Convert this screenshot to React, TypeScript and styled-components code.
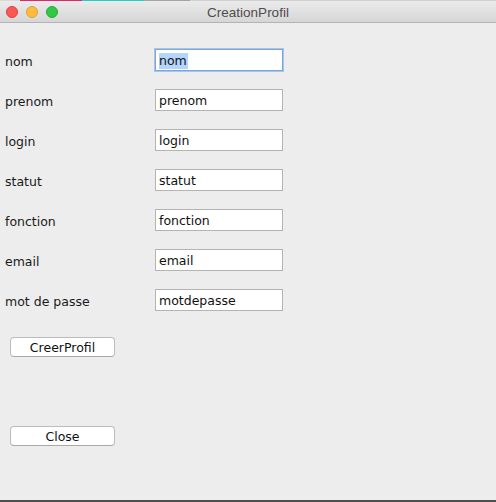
import React from 'react';
import styled, {createGlobalStyle} from "styled-components";

const GlobalStyle = createGlobalStyle`
  html, body {
    margin: 0;
    padding: 0;
    background: #ededed;
  }
  body {
    font-family: "DejaVu Sans", "Liberation Sans", sans-serif;
  }
`

const fields = [
    {label: 'nom', value: 'nom', focused: true},
    {label: 'prenom', value: 'prenom'},
    {label: 'login', value: 'login'},
    {label: 'statut', value: 'statut'},
    {label: 'fonction', value: 'fonction'},
    {label: 'email', value: 'email'},
    {label: 'mot de passe', value: 'motdepasse'},
];

const App: React.FC = () => {
    return (
        <Window>
            <GlobalStyle/>
            <TitleBar>
                <EdgeStrip>
                    <Segment $w={20} $c="#d9d9d9"/>
                    <Segment $w={62} $c="#e0266c"/>
                    <Segment $w={62} $c="#25cfc6"/>
                    <Segment $w={46} $c="#a4a4a4"/>
                    <Segment $w={306} $c="#cfcfcf"/>
                </EdgeStrip>
                <Lights>
                    <Light $bg="#fc5753" $border="#de3f3b"/>
                    <Light $bg="#fdbc40" $border="#dea034"/>
                    <Light $bg="#33c748" $border="#27aa35"/>
                </Lights>
                <Title>CreationProfil</Title>
            </TitleBar>
            <Content>
                <Form>
                    {fields.map(f => (
                        <Row key={f.label}>
                            <Label>{f.label}</Label>
                            <Field $focused={f.focused}>
                                {f.focused ? <Selected>{f.value}</Selected> : f.value}
                            </Field>
                        </Row>
                    ))}
                </Form>
                <Button $top={26}>CreerProfil</Button>
                <Button $top={69}>Close</Button>
            </Content>
            <BottomEdge/>
        </Window>
    )
};

export default App;

const Window = styled.div`
  width: 496px;
  height: 502px;
  display: flex;
  flex-direction: column;
  background: #ededed;
  overflow: hidden;
`
const TitleBar = styled.div`
  position: relative;
  height: 22px;
  flex-shrink: 0;
  display: flex;
  align-items: center;
  justify-content: center;
  background: linear-gradient(#ececec, #d6d6d6);
  border-bottom: 1px solid #b3b3b3;
`
const EdgeStrip = styled.div`
  position: absolute;
  top: 0;
  left: 0;
  right: 0;
  height: 1px;
  display: flex;
`
const Segment = styled.div<{ $w: number; $c: string }>`
  width: ${p => p.$w}px;
  background: ${p => p.$c};
`
const Lights = styled.div`
  position: absolute;
  left: 6px;
  top: 6px;
  display: flex;
  gap: 8px;
`
const Light = styled.div<{ $bg: string; $border: string }>`
  width: 12px;
  height: 12px;
  box-sizing: border-box;
  border-radius: 50%;
  background: ${p => p.$bg};
  border: 1px solid ${p => p.$border};
`
const Title = styled.div`
  font-family: "Liberation Sans", "DejaVu Sans", sans-serif;
  font-size: 13.5px;
  color: #4d4d4d;
  margin-top: 2px;
`
const Content = styled.div`
  flex: 1;
  display: flex;
  flex-direction: column;
  align-items: flex-start;
  padding-top: 26px;
`
const Form = styled.div`
  display: flex;
  flex-direction: column;
  gap: 18px;
`
const Row = styled.div`
  display: flex;
  align-items: center;
  height: 22px;
`
const Label = styled.div`
  width: 150px;
  padding-left: 5px;
  padding-top: 2px;
  font-size: 12.5px;
  color: #1a1a1a;
`
const Field = styled.div<{ $focused?: boolean }>`
  box-sizing: border-box;
  width: 128px;
  height: 22px;
  padding: 1px 3px 0;
  display: flex;
  align-items: center;
  background: #fff;
  font-size: 12.5px;
  color: #111;
  border: 1px solid ${p => p.$focused ? '#7ea6dd' : '#b4b4b4'};
  box-shadow: ${p => p.$focused ? '0 0 0 1px #a6c5ee' : 'none'};
`
const Selected = styled.span`
  background: #b4d5fe;
  line-height: 16px;
  padding-right: 1px;
`
const Button = styled.div<{ $top: number }>`
  box-sizing: border-box;
  margin-top: ${p => p.$top}px;
  margin-left: 10px;
  width: 105px;
  height: 20px;
  padding-top: 1px;
  display: flex;
  align-items: center;
  justify-content: center;
  background: #fff;
  border: 1px solid #bcbcbc;
  border-bottom-color: #a8a8a8;
  border-radius: 4px;
  font-family: "DejaVu Sans", sans-serif;
  font-size: 12.5px;
  color: #111;
`
const BottomEdge = styled.div`
  height: 2px;
  flex-shrink: 0;
  background: #4f4f4f;
`
